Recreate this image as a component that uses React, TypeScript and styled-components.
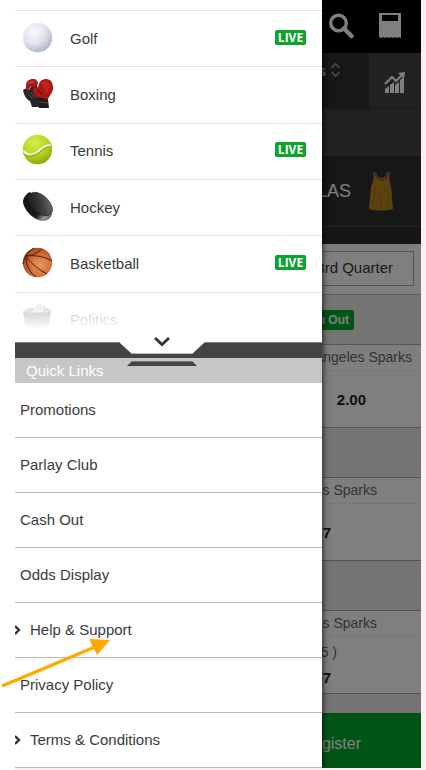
import React from "react";
import styled, { createGlobalStyle } from "styled-components";

const GlobalStyle = createGlobalStyle`
  *, *::before, *::after { box-sizing: border-box; }
  body {
    margin: 0;
    overflow: hidden;
    background: #fceef5;
    font-family: "Liberation Sans", Arial, sans-serif;
    font-size: 15px;
    color: #3a3a3a;
  }
  button, a { font: inherit; color: inherit; text-decoration: none; }
  button { border: 0; padding: 0; background: none; }
  ul { list-style: none; margin: 0; padding: 0; }
`;

const Frame = styled.main`
  position: relative;
  padding: 0 5px 2px 15px;
  background: linear-gradient(to right, #fff 15px, #fceef5 15px);
`;

const Screen = styled.div`
  display: grid;
  overflow: hidden;
  & > * { grid-area: 1 / 1; min-width: 0; }
`;

/* ---------- match page ---------- */

const MatchPage = styled.div`
  display: flex;
  flex-direction: column;
  background: #e9e9e9;
`;

const TopBar = styled.header`
  display: flex;
  justify-content: flex-end;
  align-items: center;
  gap: 25px;
  height: 53px;
  padding: 0 20px 2px 0;
  background: #000;
`;

const IconButton = styled.button`
  display: flex;
  svg { display: block; }
`;

const SortBar = styled.div`
  display: flex;
  justify-content: flex-end;
  height: 55px;
  background: #2e2e2e;
  color: #ccc;
`;

const SortButton = styled.button`
  display: flex;
  align-items: flex-start;
  gap: 4px;
  padding: 9px 28px 0 0;
  font-weight: bold;
  line-height: 18px;
`;

const ChartButton = styled(IconButton)`
  width: 52px;
  justify-content: center;
  padding-top: 18px;
  background: #444;
`;

const Spacer = styled.div`
  height: 48px;
  border-top: 1px solid #333;
  background: #434343;
`;

const TeamBar = styled.div`
  display: flex;
  justify-content: flex-end;
  align-items: center;
  gap: 17px;
  height: 71px;
  padding-right: 27px;
  border-bottom: 1px solid #444;
  background: #2e2e2e;
  color: #fff;
  font-size: 18px;
`;

const TeamFoot = styled.div`
  height: 17px;
  background: #2c2c2c;
`;

const Periods = styled.div`
  display: flex;
  justify-content: flex-end;
  padding: 7px 7px 8px;
  background: #fff;
  border-bottom: 1px solid #bbb;
`;

const Period = styled.button`
  height: 35px;
  padding: 0 20px 2px;
  border: 1px solid #aaa;
  color: #333;
`;

const MarketHead = styled.div`
  display: flex;
  justify-content: flex-end;
  align-items: center;
  height: 49px;
  padding-right: 67px;
`;

const CashOut = styled.button`
  height: 20px;
  padding: 0 5px;
  border-radius: 2px;
  background: #00a82a;
  color: #fff;
  font-size: 12px;
  font-weight: bold;
`;

const Market = styled.section`
  border: solid #aaa;
  border-width: 1px 0;
  background: #fff;
`;

const TeamName = styled.div<{ $end: number }>`
  height: 26px;
  padding-right: ${(p) => p.$end}px;
  border-bottom: 1px solid #eee;
  color: #666;
  font-size: 14px;
  line-height: 25px;
  text-align: right;
`;

const Odds = styled.div<{ $end: number }>`
  display: flex;
  flex-direction: column;
  justify-content: center;
  align-items: flex-end;
  gap: 9px;
  height: 56px;
  padding-right: ${(p) => p.$end}px;
  color: #222;
  font-weight: bold;
`;

const Line = styled.span`
  margin-right: -6px;
  color: #666;
  font-size: 14px;
  font-weight: normal;
`;

const PageEnd = styled.div`
  height: 19px;
`;

const Register = styled.button`
  height: 55px;
  padding: 6px 60px 0 0;
  background: #00a82a;
  color: #fff;
  font-size: 16px;
  text-align: right;
`;

const Scrim = styled.div`
  z-index: 1;
  background: rgba(0, 0, 0, 0.5);
`;

/* ---------- drawer ---------- */

const Drawer = styled.nav`
  z-index: 2;
  width: 307px;
  max-width: 100%;
  background: #fff;
  box-shadow: 1px 0 6px rgba(0, 0, 0, 0.7);
`;

const SportsClip = styled.div`
  position: relative;
  height: 342px;
  padding-top: 10px;
  overflow: hidden;
  &::after {
    content: "";
    position: absolute;
    inset: auto 0 0;
    height: 48px;
    background: linear-gradient(rgba(255, 255, 255, 0.45), #fff 36px);
  }
`;

const Sports = styled.ul`
  display: grid;
  grid-auto-rows: 1fr;
  height: 338px;
`;

const SportItem = styled.li`
  border-top: 1px solid #e4e4e4;
`;

const SportLink = styled.a`
  display: flex;
  align-items: center;
  height: 100%;
  padding: 0 16px 1px 7px;
  svg { width: 31px; height: 31px; margin: 0 17px 2px 0; }
`;

const Live = styled.span`
  margin: 0 0 2px auto;
  width: 31px;
  height: 15px;
  border-radius: 2px;
  background: #0aa32c;
  color: #fff;
  font: bold 12px/15px "Open Sans", sans-serif;
  text-align: center;
`;

const Expander = styled.button`
  display: block;
  width: 100%;
  height: 16px;
  background: #444;
  border-top: 1px solid #888;
  svg { display: block; position: relative; z-index: 1; margin: -8px 0 0 105px; }
`;

const QuickHead = styled.h2`
  margin: 0;
  height: 25px;
  padding-left: 11px;
  background: #c6c6c6;
  color: #fff;
  font-size: 15px;
  font-weight: normal;
  line-height: 25px;
`;

const LinkItem = styled.li`
  height: 55px;
  border-bottom: 1px solid #bbb;
`;

const QuickLink = styled.a`
  display: flex;
  align-items: center;
  gap: 8px;
  height: 100%;
  padding: 0 0 2px 5px;
  svg { margin: 2px 0 0 -5px; }
`;

const Pointer = styled.svg`
  position: absolute;
  left: 0;
  top: 636px;
  z-index: 3;
  pointer-events: none;
`;

/* ---------- drawings ---------- */

const GolfIcon = () => (
  <svg viewBox="0 0 31 31" aria-hidden="true">
    <defs>
      <radialGradient id="golf" cx=".36" cy=".3" r=".75">
        <stop offset="0" stopColor="#fff" />
        <stop offset=".55" stopColor="#e4e8ef" />
        <stop offset="1" stopColor="#aab4c6" />
      </radialGradient>
      <pattern id="dimple" width="3" height="4" patternUnits="userSpaceOnUse">
        <circle cx="1" cy="1" r=".7" fill="#b9c2d1" opacity=".5" />
        <circle cx="2.5" cy="3" r=".7" fill="#b9c2d1" opacity=".5" />
      </pattern>
    </defs>
    <circle cx="15.5" cy="15.5" r="14.7" fill="url(#golf)" />
    <circle cx="15.5" cy="15.5" r="13.7" fill="url(#dimple)" />
  </svg>
);

const BoxingIcon = () => (
  <svg viewBox="0 0 31 31" aria-hidden="true">
    <path d="M1 12c2-2 4-2 6 0l3-5h5l2 8 1 14h-8l-2-6c-4-2-6-6-7-11z" fill="#262626" />
    <path d="M4 8c0-5 3-7 7-7 3 0 5 2 5 5l-3 3-4-1-3 5-2-2z" fill="#a81a18" />
    <path d="M6 5c2-3 5-3 7-2l-2 2-4 1z" fill="#c9342e" />
    <path d="M11 10c2-1 4 0 5 1 0-6 3-10 8-10 5 0 7 4 7 9 0 4-3 7-5 11l-11-1c-3-3-5-7-4-10z" fill="#ad1616" />
    <path d="M19 5c3-3 8-2 9 2 0 3-2 6-4 9-1-5-2-8-5-11z" fill="#c6231f" />
    <path d="M16 11c0 3 2 4 4 5" fill="none" stroke="#6b0c0c" strokeWidth="1.200" />
    <path d="M15 19l11 2 1 9H17z" fill="#1e1e1e" />
    <path d="M17 24l9 1M9 14l3 6M4 14l6 6" stroke="#555" strokeWidth=".8" />
  </svg>
);

const TennisIcon = () => (
  <svg viewBox="0 0 31 31" aria-hidden="true">
    <defs>
      <radialGradient id="tennis" cx=".4" cy=".25" r=".8">
        <stop offset="0" stopColor="#d9ec4e" />
        <stop offset=".55" stopColor="#b9d51c" />
        <stop offset="1" stopColor="#86a308" />
      </radialGradient>
    </defs>
    <circle cx="15.5" cy="15.5" r="14.7" fill="url(#tennis)" />
    <path d="M1.500 18c4 5 10 4 15 0 4-4 7-6 12-6" fill="none" stroke="#96ad1a" strokeWidth="3" />
    <path d="M1.500 17c4 5 10 4 15 0 4-4 7-6 12-6" fill="none" stroke="#f2f4e2" strokeWidth="2.200" />
  </svg>
);

const HockeyIcon = () => (
  <svg viewBox="0 0 31 31" aria-hidden="true">
    <defs>
      <linearGradient id="puck" x1="0" y1="1" x2="1" y2="0">
        <stop offset="0" stopColor="#111" />
        <stop offset=".5" stopColor="#3a3a3a" />
        <stop offset="1" stopColor="#777" />
      </linearGradient>
      <linearGradient id="puckSide" x1="0" y1="0" x2="1" y2="1">
        <stop offset="0" stopColor="#111" />
        <stop offset=".65" stopColor="#1b1b1b" />
        <stop offset=".82" stopColor="#999" />
        <stop offset="1" stopColor="#222" />
      </linearGradient>
    </defs>
    <path d="M8 1C4 3 1 7 1 11c1 9 12 19 20 19 4 0 8-3 9-7z" fill="url(#puckSide)" />
    <ellipse cx="18.500" cy="13" rx="14.500" ry="8.500" transform="rotate(44 18.500 13)" fill="url(#puck)" stroke="#222" strokeWidth=".6" />
  </svg>
);

const BasketballIcon = () => (
  <svg viewBox="0 0 31 31" aria-hidden="true">
    <defs>
      <radialGradient id="basket" cx=".6" cy=".6" r=".65">
        <stop offset="0" stopColor="#e89a5e" />
        <stop offset=".55" stopColor="#d3713a" />
        <stop offset="1" stopColor="#a5431b" />
      </radialGradient>
    </defs>
    <circle cx="15.500" cy="15.500" r="14.700" fill="url(#basket)" />
    <g fill="none" stroke="#3d2114" strokeWidth="1">
      <path d="M4 9c8-1 18 0 26 5M4 10c6 7 13 13 21 17M4 9c5 0 13-4 16-7M4 11c0 7 4 15 10 19M1 17c1-6 4-12 11-16" />
    </g>
  </svg>
);

const PoliticsIcon = () => (
  <svg viewBox="0 0 31 31" aria-hidden="true">
    <path d="M13 8l3-7 7 2-3 7z" fill="#eee" stroke="#999" strokeWidth=".6" />
    <path d="M16 4l4 1M15 6l4 1" stroke="#777" strokeWidth=".7" />
    <path d="M2 8l5-3h6l-2 4h9l2-4h4l3 3-2 3H4z" fill="#aaa" />
    <path d="M1 8c8 3 20 3 28 0l-2 14c-7 4-17 4-24 0z" fill="#6b6b6b" />
  </svg>
);

const ChevronRight = () => (
  <svg width="7" height="12" viewBox="0 0 7 12" aria-hidden="true">
    <path d="M0 2l4 4-4 4" fill="none" stroke="#333" strokeWidth="2.400" />
  </svg>
);

const sports = [
  { name: "Golf", Icon: GolfIcon, live: true },
  { name: "Boxing", Icon: BoxingIcon, live: false },
  { name: "Tennis", Icon: TennisIcon, live: true },
  { name: "Hockey", Icon: HockeyIcon, live: false },
  { name: "Basketball", Icon: BasketballIcon, live: true },
  { name: "Politics", Icon: PoliticsIcon, live: false },
];

const links = [
  { name: "Promotions" },
  { name: "Parlay Club" },
  { name: "Cash Out" },
  { name: "Odds Display" },
  { name: "Help & Support", nested: true },
  { name: "Privacy Policy" },
  { name: "Terms & Conditions", nested: true },
];

export default function App() {
  return (
    <>
      <GlobalStyle />
      <Frame>
        <Screen>
          <MatchPage>
            <TopBar>
              <IconButton aria-label="Search">
                <svg width="26" height="26" viewBox="0 0 26 26">
                  <circle cx="10.500" cy="10" r="7.800" fill="none" stroke="#fff" strokeWidth="3.400" />
                  <path d="M16 15.500l7.500 7.500" stroke="#fff" strokeWidth="4.500" strokeLinecap="round" />
                </svg>
              </IconButton>
              <IconButton aria-label="Bet slip">
                <svg width="22" height="26" viewBox="0 0 22 26">
                  <path d="M0 0h22v25l-2-1-2 1-2-1-2 1-2-1-2 1-2-1-2 1-2-1-2 1-2-1-2 1z" fill="#fff" />
                  <path d="M3 2h16v6H3z" fill="#000" />
                </svg>
              </IconButton>
            </TopBar>
            <SortBar>
              <SortButton>
                Points
                <svg width="11" height="16" viewBox="0 0 11 16" aria-hidden="true">
                  <path d="M1.500 6l4-4 4 4M1.500 10l4 4 4-4" fill="none" stroke="#999" strokeWidth="1.600" />
                </svg>
              </SortButton>
              <ChartButton aria-label="Statistics">
                <svg width="22" height="23" viewBox="0 0 22 23">
                  <path d="M1 18l4-3v7H1zM6 14l4-3v11H6zM11 14l4-3v11h-4zM16 9l4-3v16h-4z" fill="#fff" />
                  <path d="M1 13l7-7 4 4 6-6" fill="none" stroke="#fff" strokeWidth="2" />
                  <path d="M14 2l7-1-1 7z" fill="#fff" />
                </svg>
              </ChartButton>
            </SortBar>
            <Spacer />
            <TeamBar>
              <span>LAS</span>
              <svg width="26" height="40" viewBox="0 0 26 40" aria-hidden="true">
                <path d="M5 1h3c1 4 3 6 5.500 6S18 5 19 1h3c-1 6 0 10 1 14 1 7 1 15 2 23-8 2-17 2-24 0 1-8 1-16 2-23 2-4 3-8 2-14z" fill="#b4861f" />
                <path d="M5 1c1 6 0 10-2 14M22 1c-1 6 0 10 1 14M7 1c1 6 3 8 6.500 8S19 7 20 1" fill="none" stroke="#6b2f6a" strokeWidth="1.200" />
                <path d="M7 17l-2 19M19 17l2 19M13 22v15" stroke="#96701a" strokeWidth=".8" />
              </svg>
            </TeamBar>
            <TeamFoot />
            <Periods><Period>3rd Quarter</Period></Periods>
            <MarketHead><CashOut>Cash Out</CashOut></MarketHead>
            <Market>
              <TeamName $end={9}>Los Angeles Sparks</TeamName>
              <Odds $end={55}>2.00</Odds>
            </Market>
            <MarketHead />
            <Market>
              <TeamName $end={44}>Los Angeles Sparks</TeamName>
              <Odds $end={90}>1.57</Odds>
            </Market>
            <MarketHead />
            <Market>
              <TeamName $end={44}>Los Angeles Sparks</TeamName>
              <Odds $end={90}><Line>( 5.5 )</Line>1.57</Odds>
            </Market>
            <PageEnd />
            <Register>Register</Register>
          </MatchPage>
          <Scrim />
          <Drawer aria-label="Main menu">
            <SportsClip>
              <Sports>
                {sports.map(({ name, Icon, live }) => (
                  <SportItem key={name}>
                    <SportLink href="#">
                      <Icon />
                      {name}
                      {live && <Live>LIVE</Live>}
                    </SportLink>
                  </SportItem>
                ))}
              </Sports>
            </SportsClip>
            <Expander aria-label="Show more sports">
              <svg width="84" height="32" viewBox="0 0 84 32" aria-hidden="true">
                <path d="M0 6h84v2L72 19H12L0 8z" fill="#fff" />
                <path d="M12 18.500h60" stroke="#bbb" />
                <path d="M35 3l7 6.500L49 3" fill="none" stroke="#333" strokeWidth="2.800" />
                <path d="M12 26h60l5 5H7z" fill="#444" />
                <path d="M12 26.500h60" stroke="#777" />
              </svg>
            </Expander>
            <QuickHead>Quick Links</QuickHead>
            <ul>
              {links.map(({ name, nested }) => (
                <LinkItem key={name}>
                  <QuickLink href="#">
                    {nested && <ChevronRight />}
                    {name}
                  </QuickLink>
                </LinkItem>
              ))}
            </ul>
          </Drawer>
        </Screen>
        <Pointer width="112" height="54" viewBox="0 0 112 54" aria-hidden="true">
          <path d="M2 50L95 11" stroke="#ffa800" strokeWidth="3.500" />
          <path d="M110 4L89 3l8 16z" fill="#ffa800" />
        </Pointer>
      </Frame>
    </>
  );
}
